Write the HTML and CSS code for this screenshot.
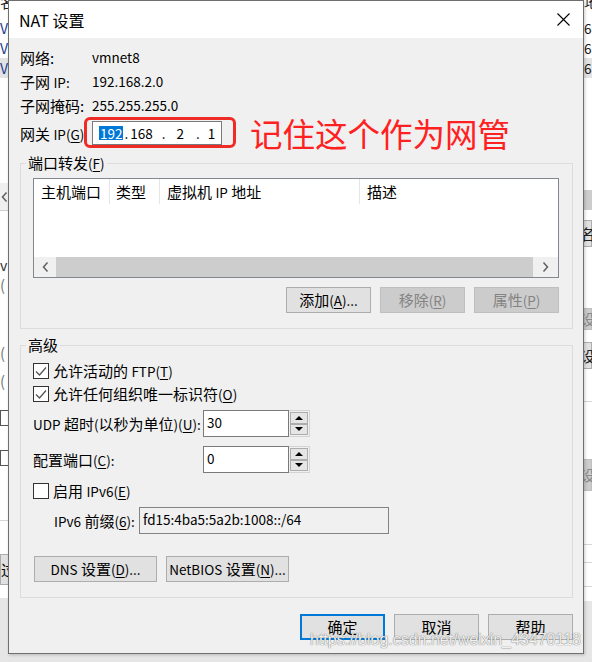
FILE: index.html
```html
<!DOCTYPE html>
<html lang="zh-CN">
<head>
<meta charset="utf-8">
<title>NAT 设置</title>
<link rel="stylesheet" href="styles.css">
</head>
<body>
<div class="screen">
  <div class="bg bgl">
    <div class="bh"><span>名</span></div>
    <div class="br"><span class="bv">V</span></div>
    <div class="br"><span class="bv">V</span></div>
    <div class="br hl"><span class="bv">V</span></div>
    <div class="sp h105"></div>
    <div class="bscroll"><svg width="7" height="10" viewBox="0 0 7 10"><polyline points="5.5,0.5 1.5,5 5.5,9.5" fill="none" stroke="#606060" stroke-width="1.5"/></svg></div>
    <div class="sp h44"></div>
    <div class="br"><span class="bv dk">v</span></div>
    <div class="br gl">(</div>
    <div class="sp h48"></div>
    <div class="br gl">(</div>
    <div class="sp h8"></div>
    <div class="br gl">(</div>
    <div class="sp h19"></div>
    <div class="bbox"></div>
    <div class="sp h24"></div>
    <div class="bbox"></div>
    <div class="sp h54"></div>
    <div class="bline"></div>
    <div class="sp h33"></div>
    <div class="bbtn"><span>过</span></div>
    <div class="sp h13"></div>
    <div class="bgrey"></div>
  </div>

  <div class="mid">
    <div class="dialog">
      <div class="titlebar">
        <span class="title"><span class="tl">NAT</span> 设置</span>
        <svg class="close" width="13" height="13" viewBox="0 0 13 13"><path d="M0.5 0.5L12.5 12.5M12.5 0.5L0.5 12.5" stroke="#000" stroke-width="1.1" fill="none"/></svg>
      </div>
      <div class="body">
        <div class="row"><span class="k">网络:</span><span class="l">vmnet8</span></div>
        <div class="row"><span class="k">子网 <span class="l">IP:</span></span><span class="l">192.168.2.0</span></div>
        <div class="row"><span class="k">子网掩码:</span><span class="l">255.255.255.0</span></div>
        <div class="row gw">
          <span class="k">网关 <span class="l">IP(<u>G</u>)</span></span>
          <div class="ipbox">
            <span class="sel">192</span><span class="d1">.</span><span>168</span><span class="d2">.</span><span class="o3">2</span><span class="d3">.</span><span class="o4">1</span>
            <div class="mark"></div>
          </div>
          <span class="note">记住这个作为网管</span>
        </div>

        <fieldset class="group g1">
          <legend>端口转发<span class="l">(<u>F</u>)</span></legend>
          <div class="list">
            <div class="lhead">
              <div class="col c1"><span>主机端口</span></div>
              <div class="col c2"><span>类型</span></div>
              <div class="col c3"><span>虚拟机 <span class="l">IP</span> 地址</span></div>
              <div class="col c4"><span>描述</span></div>
            </div>
            <div class="lbody"></div>
            <div class="hscroll">
              <div class="sbb left"><svg width="7" height="10" viewBox="0 0 7 10"><polyline points="5.5,0.5 1.5,5 5.5,9.5" fill="none" stroke="#606060" stroke-width="1.5"/></svg></div>
              <div class="thumb"></div>
              <div class="sbb right"><svg width="7" height="10" viewBox="0 0 7 10"><polyline points="1.5,0.5 5.5,5 1.5,9.5" fill="none" stroke="#606060" stroke-width="1.5"/></svg></div>
            </div>
          </div>
          <div class="btnrow">
            <button class="btn"><span>添加<span class="l">(<u>A</u>)...</span></span></button>
            <button class="btn dis"><span>移除<span class="l">(<u>R</u>)</span></span></button>
            <button class="btn dis"><span>属性<span class="l">(<u>P</u>)</span></span></button>
          </div>
        </fieldset>

        <fieldset class="group g2">
          <legend>高级</legend>
          <div class="cbrow">
            <span class="cb"><svg width="14" height="14" viewBox="0 0 14 14"><polyline points="2,7.5 5.5,11 12,3.5" fill="none" stroke="#555" stroke-width="1.3"/></svg></span>
            <span>允许活动的 <span class="l">FTP(<u>T</u>)</span></span>
          </div>
          <div class="cbrow">
            <span class="cb"><svg width="14" height="14" viewBox="0 0 14 14"><polyline points="2,7.5 5.5,11 12,3.5" fill="none" stroke="#555" stroke-width="1.3"/></svg></span>
            <span>允许任何组织唯一标识符<span class="l">(<u>O</u>)</span></span>
          </div>
          <div class="frow r-udp">
            <span class="flabel"><span class="l">UDP</span> 超时<span class="l">(</span>以秒为单位<span class="l">)(<u>U</u>):</span></span>
            <div class="num">30</div>
            <div class="spin">
              <div class="sb"><svg width="8" height="4" viewBox="0 0 8 4"><polygon points="0,4 8,4 4,0" fill="#000"/></svg></div>
              <div class="sb"><svg width="8" height="4" viewBox="0 0 8 4"><polygon points="0,0 8,0 4,4" fill="#000"/></svg></div>
            </div>
          </div>
          <div class="frow r-port">
            <span class="flabel">配置端口<span class="l">(<u>C</u>):</span></span>
            <div class="num">0</div>
            <div class="spin">
              <div class="sb"><svg width="8" height="4" viewBox="0 0 8 4"><polygon points="0,4 8,4 4,0" fill="#000"/></svg></div>
              <div class="sb"><svg width="8" height="4" viewBox="0 0 8 4"><polygon points="0,0 8,0 4,4" fill="#000"/></svg></div>
            </div>
          </div>
          <div class="cbrow r-v6">
            <span class="cb"></span>
            <span>启用 <span class="l">IPv6(<u>E</u>)</span></span>
          </div>
          <div class="frow r-pre">
            <span class="plabel"><span class="l">IPv6</span> 前缀<span class="l">(<u>6</u>):</span></span>
            <div class="pfield">fd15:4ba5:5a2b:1008::/64</div>
          </div>
          <div class="dnsrow">
            <button class="btn wide"><span><span class="l">DNS</span> 设置<span class="l">(<u>D</u>)...</span></span></button>
            <button class="btn wide"><span><span class="l">NetBIOS</span> 设置<span class="l">(<u>N</u>)...</span></span></button>
          </div>
        </fieldset>

        <div class="footer">
          <button class="btn def"><span>确定</span></button>
          <button class="btn"><span>取消</span></button>
          <button class="btn"><span>帮助</span></button>
        </div>
      </div>
      <div class="watermark">https://blog.csdn.net/weixin_43470118</div>
    </div>
    <div class="under"></div>
  </div>

  <div class="bg bgr">
    <div class="bh"><span>地</span></div>
    <div class="br"><span class="bn">68</span></div>
    <div class="br"><span class="bn">68</span></div>
    <div class="br hl"><span class="bn">68</span></div>
    <div class="sp h112"></div>
    <div class="rband"></div>
    <div class="sp h10"></div>
    <div class="rbtn"><span>名</span></div>
    <div class="sp h61"></div>
    <div class="rbtn dis short"><span>设</span></div>
    <div class="sp h12"></div>
    <div class="rbtn"><span>设</span></div>
    <div class="sp h32"></div>
    <div class="bline"></div>
    <div class="sp h57"></div>
    <div class="rbtn dis tall"><span>设</span></div>
    <div class="sp h53"></div>
    <div class="bline"></div>
    <div class="sp h17"></div>
    <div class="bline"></div>
    <div class="sp h23"></div>
    <div class="bline"></div>
    <div class="sp h14"></div>
    <div class="bgrey"></div>
  </div>
</div>
</body>
</html>
```
FILE: styles.css
```css
* { box-sizing: border-box; }
html, body { margin: 0; padding: 0; }
body {
  width: 592px;
  height: 662px;
  overflow: hidden;
  background: #e8e8e8;
  font-family: "Noto Sans CJK SC", "Noto Sans", sans-serif;
  font-size: 15px;
  color: #000;
}
.screen { display: flex; width: 592px; height: 662px; }

/* background window strips */
.bg { width: 8px; flex: none; display: flex; flex-direction: column; background: #fff; overflow: hidden; font-size: 15px; }
.bh { height: 18px; overflow: hidden; line-height: 14px; color: #222; }
.bh span { display: block; margin-top: -5px; }
.br { height: 20px; line-height: 20px; white-space: nowrap; flex: none; }
.br.hl { background: #e3e3e3; }
.bv { color: #1d3b8f; font-size: 14px; }
.bv.dk { color: #333; }
.bn { color: #1a1a1a; font-size: 13.5px; }
.gl { color: #777; }
.sp { flex: none; }
.h8 { height: 8px; } .h10 { height: 10px; } .h12 { height: 12px; } .h13 { height: 13px; }
.h14 { height: 14px; } .h17 { height: 17px; } .h19 { height: 19px; } .h23 { height: 23px; }
.h24 { height: 24px; } .h32 { height: 32px; } .h33 { height: 33px; } .h44 { height: 44px; }
.h48 { height: 48px; } .h53 { height: 53px; } .h54 { height: 54px; } .h57 { height: 57px; }
.h61 { height: 61px; } .h105 { height: 105px; } .h112 { height: 112px; }
.bscroll { height: 28px; flex: none; background: #f0f0f0; border-bottom: 1px solid #cfcfcf; display: flex; align-items: center; padding-left: 1px; }
.bbox { height: 16px; flex: none; border: 1px solid #555; border-right: none; }
.bline { height: 1px; flex: none; background: #d6d6d6; }
.bbtn { height: 31px; flex: none; border: 1px solid #adadad; border-right: none; background: #e1e1e1; line-height: 29px; white-space: nowrap; }
.bgrey { flex: 1; background: #e6e6e6; }
.rband { height: 20px; flex: none; background: #cdcdcd; }
.rbtn { height: 27px; flex: none; border: 1px solid #adadad; border-left: none; background: #e1e1e1; line-height: 25px; color: #222; white-space: nowrap; margin-left: -4px; }
.rbtn.dis { background: #cccccc; border-color: #bfbfbf; color: #8a8a8a; }
.rbtn.short { height: 22px; line-height: 20px; }
.rbtn.tall { height: 32px; line-height: 30px; }

/* dialog */
.mid { width: 576px; flex: none; display: flex; flex-direction: column; }
.dialog {
  position: relative;
  height: 654px;
  flex: none;
  border: 1px solid #6f6f6f;
  background: #f0f0f0;
  display: flex;
  flex-direction: column;
  box-shadow: 1px 1px 3px rgba(0,0,0,0.2);
}
.under { flex: 1; background: #e6e6e6; }

.l { font-size: 13.5px; }
u { text-decoration: underline; text-decoration-thickness: 1px; text-underline-offset: 2px; }

.titlebar {
  height: 37px;
  flex: none;
  background: #fff;
  display: flex;
  align-items: center;
  justify-content: space-between;
  padding: 0 13px 0 10px;
}
.title { font-size: 16px; }
.tl { font-size: 16px; }
.close { display: block; }

.body { flex: 1; padding: 7px 10px 0 11px; display: flex; flex-direction: column; }
.row { display: flex; align-items: center; height: 24px; white-space: nowrap; flex: none; }
.k { width: 72px; flex: none; }
.gw { margin-top: 4px; }

.ipbox {
  position: relative;
  width: 130px;
  height: 24px;
  flex: none;
  border: 1px solid #7a7a7a;
  background: #fff;
  display: flex;
  align-items: center;
  padding-left: 6px;
  font-size: 13.5px;
}
.sel { background: #0078d7; color: #fff; line-height: 14px; padding: 0 1px; }
.d1 { margin: 0 2px 0 1px; }
.d2 { margin-left: 9px; }
.o3 { margin-left: 11px; }
.d3 { margin-left: 12px; }
.o4 { margin-left: 8px; }
.mark {
  position: absolute;
  left: -9px;
  top: -5px;
  width: 152px;
  height: 31px;
  border: 3px solid #ee2b25;
  border-radius: 6px;
}
.note { margin-left: 28px; font-size: 32.5px; line-height: 24px; color: #ff2121; }

/* group boxes */
.group {
  margin: 8px 0 0;
  padding: 5px 13px 15px 12px;
  border: 1px solid #dcdcdc;
  min-width: 0;
}
.group legend { padding: 0 2px; margin-left: -7px; line-height: 20px; }
.g2 { margin-top: 6px; padding: 4px 13px 15px 12px; }

.list {
  height: 100px;
  border: 1px solid #828790;
  background: #fff;
  display: flex;
  flex-direction: column;
}
.lhead { height: 25px; flex: none; display: flex; }
.col { height: 25px; display: flex; align-items: center; white-space: nowrap; }
.c1 { width: 76px; padding-left: 7px; border-right: 1px solid #e5e5e5; }
.c2 { width: 50px; padding-left: 6px; border-right: 1px solid #e5e5e5; }
.c3 { width: 200px; padding-left: 7px; border-right: 1px solid #e5e5e5; }
.c4 { flex: 1; padding-left: 7px; }
.lbody { flex: 1; }
.hscroll { height: 20px; flex: none; display: flex; background: #f0f0f0; }
.sbb { display: flex; align-items: center; justify-content: center; flex: none; }
.sbb.left { width: 22px; }
.sbb.right { width: 25px; }
.thumb { flex: 1; background: #cdcdcd; }

.btnrow { display: flex; justify-content: flex-end; gap: 9px; margin-top: 9px; }
.btn {
  width: 85px;
  height: 26px;
  flex: none;
  border: 1px solid #adadad;
  background: #e1e1e1;
  font-family: inherit;
  font-size: 15px;
  color: #000;
  padding: 0 0 1px;
  display: flex;
  align-items: center;
  justify-content: center;
  white-space: nowrap;
  line-height: 1;
}
.btn.dis { background: #cccccc; border-color: #bfbfbf; color: #838383; }
.btn.def { border: 2px solid #0078d7; }
.btn.wide { width: 123px; }

.cbrow { display: flex; align-items: center; height: 23px; white-space: nowrap; }
.cb {
  width: 16px;
  height: 16px;
  flex: none;
  border: 1px solid #333;
  background: #fff;
  margin-right: 4px;
  display: block;
}
.cb svg { display: block; }

.frow { display: flex; align-items: center; height: 27px; white-space: nowrap; }
.r-udp { margin-top: 5px; }
.r-port { margin-top: 9px; }
.r-v6 { margin-top: 6px; }
.r-pre { margin-top: 5px; padding-left: 21px; }
.flabel { width: 170px; flex: none; }
.num {
  width: 86px;
  height: 27px;
  flex: none;
  border: 1px solid #7a7a7a;
  background: #fff;
  padding: 0 0 4px 3px;
  display: flex;
  align-items: center;
  font-size: 13.5px;
}
.spin {
  width: 21px;
  height: 27px;
  flex: none;
  display: flex;
  flex-direction: column;
  padding: 1px;
  border: 1px solid #d4d4d4;
  border-left: none;
  background: #f0f0f0;
}
.sb { flex: 1; border: 1px solid #adadad; background: #e5e5e5; display: flex; align-items: center; justify-content: center; }
.sb svg { display: block; }
.plabel { width: 85px; flex: none; }
.pfield {
  width: 250px;
  height: 27px;
  flex: none;
  border: 1px solid #838383;
  background: #f0f0f0;
  padding: 0 0 3px 3px;
  display: flex;
  align-items: center;
  font-size: 13.5px;
}
.dnsrow { display: flex; gap: 9px; margin-top: 22px; padding-left: 1px; }

.footer { display: flex; justify-content: flex-end; gap: 9px; margin-top: 16px; }

.watermark {
  position: absolute;
  left: 301px;
  top: 630px;
  font-family: "Liberation Sans", Arial, sans-serif;
  font-size: 16px;
  line-height: 18px;
  color: rgba(255,255,255,0.92);
  text-shadow: 0 0 1px rgba(60,60,60,0.7), 0 0 1px rgba(120,120,120,0.6);
  white-space: nowrap;
  pointer-events: none;
}
```
